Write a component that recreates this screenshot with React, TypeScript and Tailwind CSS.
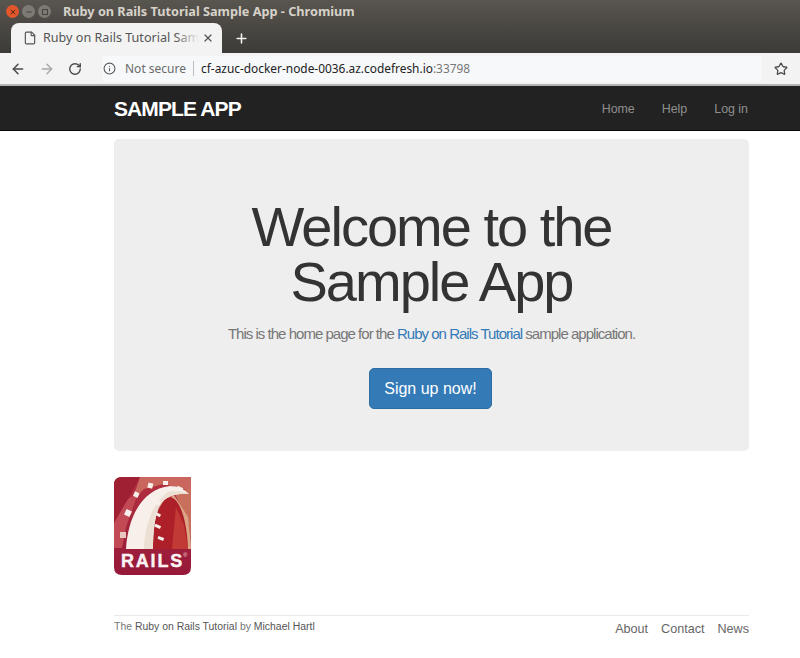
import React from "react";
import { ArrowLeft, ArrowRight, RotateCw, Info, Star, File, X, Plus, Minus } from "lucide-react";

function RailsLogo() {
  return (
    <div className="relative w-[77px] h-[98px]">
      <svg width="77" height="98" viewBox="0 0 77 98" className="block">
        <defs>
          <clipPath id="clip"><path d="M8 0 H77 V90 Q77 98 69 98 H8 Q0 98 0 90 V8 Q0 0 8 0 Z" /></clipPath>
          <linearGradient id="base" x1="0" y1="0" x2="0" y2="1">
            <stop offset="0" stopColor="#b3303f" />
            <stop offset="1" stopColor="#96193a" />
          </linearGradient>
        </defs>
        <g clipPath="url(#clip)">
          <rect width="77" height="98" fill="url(#base)" />
          <polygon points="0,0 26,0 14,22 0,46" fill="#9f1f33" />
          <polygon points="26,0 77,0 77,14 50,7 30,12 18,24" fill="#c9675f" />
          <polygon points="0,46 14,22 24,16 12,50 8,71 0,71" fill="#c24a55" />
          <polygon points="60,14 77,12 77,72 72,72 72,44" fill="#c9705c" />
          <polygon points="46,26 60,18 74,40 77,72 40,72" fill="#dca585" />
          <path d="M39 72 C38 44 46 22 56 20 C67 22 73 46 74 72 Z" fill="#ad2029" />
          <polygon points="62,30 70,48 74,72 58,72" fill="#c23a35" />
          <path d="M12 72 C14 40 28 12 56 9 C64 9 70 12 75 17 C62 16 52 19 46 28 C41 38 39 54 39 72 Z" fill="#f7efe9" />
          <path d="M30 72 C31 46 39 26 54 15 C62 13 68 14 75 17 C62 16 52 19 46 28 C41 38 39 54 39 72 Z" fill="#ecdfd3" />
          <g fill="#f8eeea">
            <rect x="20" y="15" width="5" height="5" transform="rotate(25 22 17)" />
            <rect x="34" y="6" width="5" height="5" transform="rotate(15 36 8)" />
            <rect x="49" y="4" width="5" height="4" />
            <rect x="63" y="10" width="6" height="3" transform="rotate(25 66 11)" />
            <rect x="11" y="33" width="6" height="6" transform="rotate(25 14 36)" />
            <rect x="6" y="55" width="6" height="6" fill="#e8c8c0" />
            <rect x="42" y="24" width="4" height="4" transform="rotate(30 44 26)" />
            <rect x="42" y="36" width="5" height="3" transform="rotate(30 44 37)" />
            <rect x="41" y="48" width="6" height="3" transform="rotate(25 44 49)" />
            <rect x="44" y="60" width="6" height="3" transform="rotate(20 47 61)" />
          </g>
        </g>
      </svg>
      <span className="absolute left-[7px] top-[74px] text-[18px] leading-[20px] font-bold tracking-[1.8px] text-[#fbf3f3] [-webkit-text-stroke:0.4px_#fbf3f3] font-['Liberation_Sans',sans-serif]">RAILS</span>
      <span className="absolute left-[69px] top-[75px] text-[6px] leading-[7px] text-[#f3d8d8] font-['Liberation_Sans',sans-serif]">®</span>
    </div>
  );
}

export default function App() {
  return (
    <div className="w-[800px] h-[658px] overflow-hidden bg-white font-['Liberation_Sans',sans-serif] text-[#333]">
      {/* window chrome */}
      <div className="h-[53px] bg-gradient-to-b from-[#59554f] to-[#3c3b37] flex flex-col">
        <div className="h-[23px] flex items-center pl-[6px] gap-[3px]">
          <span className="w-[13px] h-[13px] rounded-full bg-[#e2562b] flex items-center justify-center"><X size={8} strokeWidth={3} className="text-[#5c2412]" /></span>
          <span className="w-[13px] h-[13px] rounded-full bg-[#7d7a74] flex items-center justify-center"><Minus size={8} strokeWidth={3} className="text-[#45433f]" /></span>
          <span className="w-[13px] h-[13px] rounded-full bg-[#7d7a74] flex items-center justify-center"><span className="w-[6px] h-[6px] border border-[#45433f]" /></span>
          <span className="ml-[9px] text-[12.7px] font-bold text-[#d6d2c9] font-['Noto_Sans',sans-serif] leading-none">Ruby on Rails Tutorial Sample App - Chromium</span>
        </div>
        <div className="flex items-end h-[30px]">
          <div className="relative ml-[11px] w-[211px] h-[30px] bg-[#f3f3f3] rounded-t-[8px] flex items-center pl-[12px] pr-[8px]">
            <File size={14} className="text-[#555] shrink-0" />
            <span className="ml-[6px] w-[153px] whitespace-nowrap text-[12.6px] text-[#555] font-['Noto_Sans',sans-serif]">Ruby on Rails Tutorial Sam</span>
            <span className="absolute left-[164px] top-0 w-[24px] h-full bg-gradient-to-r from-transparent to-[#f3f3f3]" />
            <X size={12} strokeWidth={2.5} className="relative ml-[6px] text-[#555] shrink-0" />
          </div>
          <Plus size={15} strokeWidth={2.5} className="ml-[12px] mb-[7px] text-[#f2f2f2]" />
        </div>
      </div>
      <div className="h-[33px] bg-[#f3f3f3] border-b-2 border-[#b4b4b4] flex items-center">
        <ArrowLeft size={16} strokeWidth={2.2} className="ml-[10px] text-[#4a4a4a]" />
        <ArrowRight size={16} strokeWidth={2.2} className="ml-[13px] text-[#a8a8a8]" />
        <RotateCw size={14} strokeWidth={2.4} className="ml-[13px] text-[#4a4a4a]" />
        <div className="ml-[20px] flex-1 flex items-center h-[26px] bg-[#f7f8fa] rounded-[3px]">
          <Info size={13} className="text-[#5a5a5a] ml-[1px]" />
          <span className="ml-[9px] text-[12px] text-[#6a6a6a] font-['Noto_Sans',sans-serif]">Not secure</span>
          <span className="ml-[7px] w-px h-[15px] bg-[#bdbdbd]" />
          <span className="ml-[7px] text-[11.9px] text-[#222] font-['Noto_Sans',sans-serif]">cf-azuc-docker-node-0036.az.codefresh.io<span className="text-[#777]">:33798</span></span>
        </div>
        <Star size={14} strokeWidth={2.2} className="mx-[12px] text-[#4a4a4a]" />
      </div>

      {/* navbar */}
      <div className="h-[45px] bg-[#222] flex items-center pl-[114px] pr-[52px] justify-between border-b border-[#080808]">
        <span className="text-[21px] font-bold text-white tracking-[-0.9px] leading-none">SAMPLE APP</span>
        <nav className="flex gap-[27px] pt-[2px] text-[12.4px] text-[#8f8f8f]">
          <span>Home</span>
          <span>Help</span>
          <span>Log in</span>
        </nav>
      </div>

      {/* main */}
      <div className="pl-[114px] pt-[8px] pr-[51px]">
        <div className="h-[312px] bg-[#eee] rounded-[5px] flex flex-col items-center pt-[60px]">
          <h1 className="text-[56px] leading-[55px] tracking-[-2px] text-[#333] text-center font-normal">Welcome to the<br />Sample App</h1>
          <p className="mt-[15px] text-[15px] leading-[20px] tracking-[-0.98px] text-[#777]">
            This is the home page for the <span className="text-[#337ab7]">Ruby on Rails Tutorial</span> sample application.
          </p>
          <button className="mt-[24px] mr-[2px] w-[123px] h-[41px] bg-[#337ab7] border border-[#2e6da4] rounded-[5px] text-[16px] text-white">Sign up now!</button>
        </div>
        <div className="mt-[26px]"><RailsLogo /></div>
        <footer className="mt-[40px] border-t border-[#eaeaea] flex justify-between text-[#777]">
          <span className="pt-[4px] text-[10.45px] leading-[14px]">The <span className="text-[#555]">Ruby on Rails Tutorial</span> by <span className="text-[#555]">Michael Hartl</span></span>
          <nav className="flex gap-[13px] pt-[6px] text-[12.6px] leading-[15px] text-[#666]">
            <span>About</span>
            <span>Contact</span>
            <span>News</span>
          </nav>
        </footer>
      </div>
    </div>
  );
}
